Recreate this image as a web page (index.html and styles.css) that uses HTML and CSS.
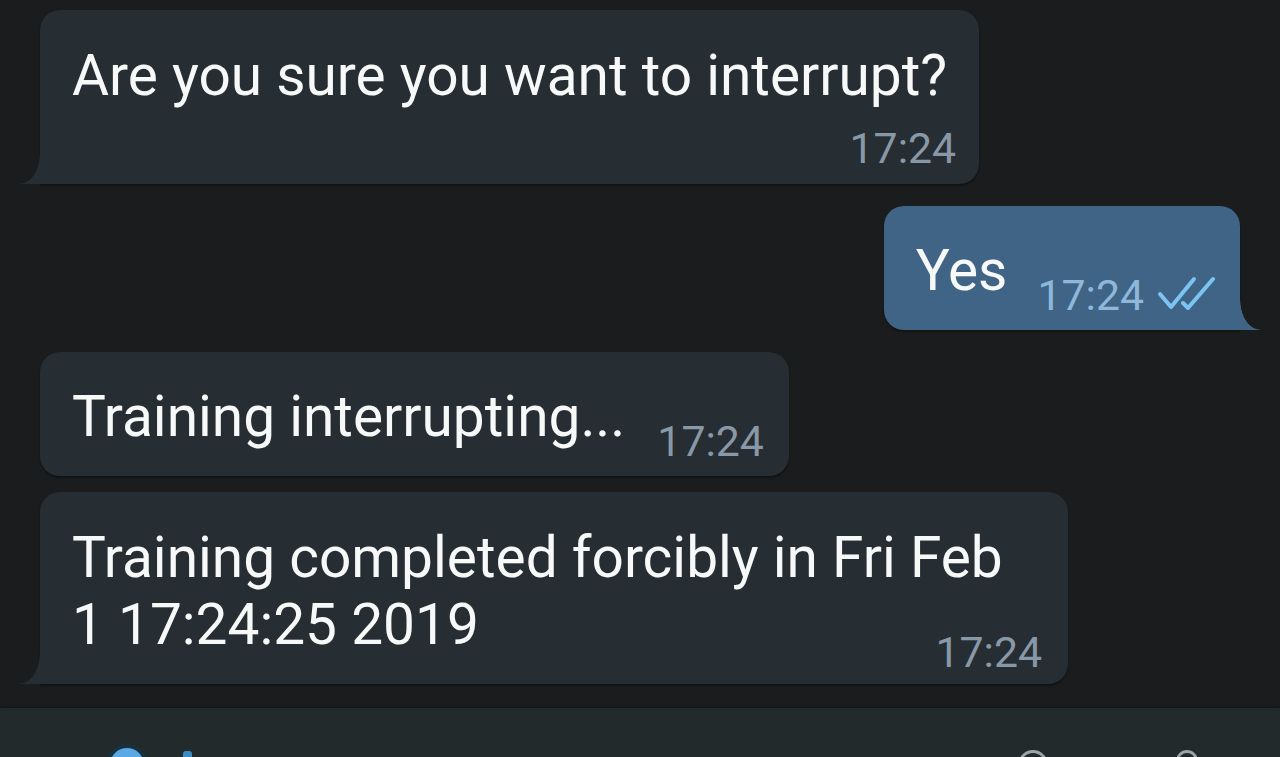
FILE: index.html
```html
<!DOCTYPE html>
<html lang="en">
<head>
<meta charset="utf-8">
<title>Chat</title>
<link rel="stylesheet" href="styles.css">
</head>
<body>
<div class="screen">
  <div class="chat">
    <div class="msg in stacked tail-l">
      <div class="text">Are you sure you want to interrupt?</div>
      <div class="time">17:24</div>
    </div>
    <div class="msg out inline tail-r">
      <div class="text">Yes</div>
      <div class="meta">
        <span class="time">17:24</span>
        <svg class="checks" width="58" height="34" viewBox="0 0 58 34" aria-hidden="true">
          <path d="M3 18 L14 31 L37 3" fill="none" stroke="#7cc4f4" stroke-width="4" stroke-linecap="round" stroke-linejoin="round"/>
          <path d="M26 27 L31 32 L56 3" fill="none" stroke="#7cc4f4" stroke-width="4" stroke-linecap="round" stroke-linejoin="round"/>
        </svg>
      </div>
    </div>
    <div class="msg in inline">
      <div class="text">Training interrupting...</div>
      <div class="meta"><span class="time">17:24</span></div>
    </div>
    <div class="msg in overlay tail-l">
      <div class="text">Training completed forcibly in Fri Feb 1 17:24:25 2019</div>
      <div class="time">17:24</div>
    </div>
  </div>
  <div class="composer">
    <div class="left-tools">
      <span class="dot-blue"></span>
      <span class="mark-blue"></span>
    </div>
    <div class="right-tools">
      <span class="ring ring-lg"></span>
      <span class="ring ring-sm"></span>
    </div>
  </div>
</div>
</body>
</html>
```

FILE: styles.css
```css
* { box-sizing: border-box; }

html, body {
  margin: 0;
  padding: 0;
}

body {
  background: #1a1c1d;
  font-family: Roboto, "Noto Sans", "Liberation Sans", sans-serif;
  height: 757px;
  overflow: hidden;
}

.screen {
  display: flex;
  flex-direction: column;
}

.chat {
  display: flex;
  flex-direction: column;
  padding-top: 10px;
}

.msg {
  position: relative;
  border-radius: 20px;
  color: #f7f8f8;
  box-shadow: 0 2px 2px rgba(0, 0, 0, 0.35);
}

.msg.in {
  background: #262d33;
  align-self: flex-start;
  margin-left: 40px;
}

.msg.out {
  background: #3f6486;
  align-self: flex-end;
  margin-right: 40px;
}

.msg + .msg { margin-top: 22px; }
.msg.in + .msg.in { margin-top: 16px; }

.text {
  font-size: 56.8px;
  line-height: 67px;
}

.time {
  font-size: 42.8px;
  line-height: 42px;
  color: #8898a6;
  white-space: nowrap;
}

.msg.out .time { color: #8fb7da; }

/* text above, time below */
.msg.stacked {
  display: flex;
  flex-direction: column;
  padding: 32px 23px 15px 32px;
}
.msg.stacked .text { margin-right: 9px; }
.msg.stacked .time {
  align-self: flex-end;
  margin-top: 18px;
}

/* text and time on one row */
.msg.inline {
  display: flex;
  align-items: flex-end;
  padding: 31px 25px 14px 32px;
}
.msg.inline .text { margin-bottom: 12px; }
.msg.inline .meta {
  display: flex;
  align-items: center;
  margin-left: 32px;
}
.msg.out.inline .meta { margin-left: 30px; }
.checks {
  margin-left: 13px;
  margin-bottom: 4px;
}

/* wrapped text, time beside the last line */
.msg.overlay {
  display: grid;
  width: 1028px;
  padding: 32px 26px 11px 32px;
}
.msg.overlay > * { grid-area: 1 / 1; }
.msg.overlay .text {
  max-width: 950px;
  margin-bottom: 15px;
}
.msg.overlay .time {
  justify-self: end;
  align-self: end;
}

/* bubble tails */
.msg.tail-l { border-bottom-left-radius: 0; }
.msg.tail-l::before {
  content: "";
  position: absolute;
  left: -20px;
  bottom: 0;
  width: 20px;
  height: 30px;
  background: radial-gradient(20px 30px at 0 0, transparent 97%, #262d33 100%);
}

.msg.tail-r { border-bottom-right-radius: 0; }
.msg.tail-r::after {
  content: "";
  position: absolute;
  right: -20px;
  bottom: 0;
  width: 20px;
  height: 30px;
  background: radial-gradient(20px 30px at 100% 0, transparent 97%, #3f6486 100%);
}

/* composer bar */
.composer {
  margin-top: 24px;
  height: 120px;
  background: #232a2b;
  box-shadow: 0 -1px 3px rgba(0, 0, 0, 0.35);
  display: flex;
  justify-content: space-between;
  align-items: flex-start;
  padding: 40px 82px 0 110px;
}

.left-tools, .right-tools {
  display: flex;
  align-items: flex-start;
}

.dot-blue {
  width: 34px;
  height: 34px;
  border-radius: 50%;
  background: #5aa9e6;
  box-shadow: 0 0 0 4px rgba(22, 50, 66, 0.8);
}

.mark-blue {
  width: 9px;
  height: 20px;
  margin-left: 39px;
  margin-top: 3px;
  border-radius: 3px;
  background: #3b8cc4;
}

.ring {
  border-radius: 50%;
  border: 3px solid #9aa3a8;
}
.ring-lg {
  width: 30px;
  height: 30px;
  margin-top: 2px;
}
.ring-sm {
  width: 22px;
  height: 22px;
  margin-top: 2px;
  margin-left: 128px;
}
```
